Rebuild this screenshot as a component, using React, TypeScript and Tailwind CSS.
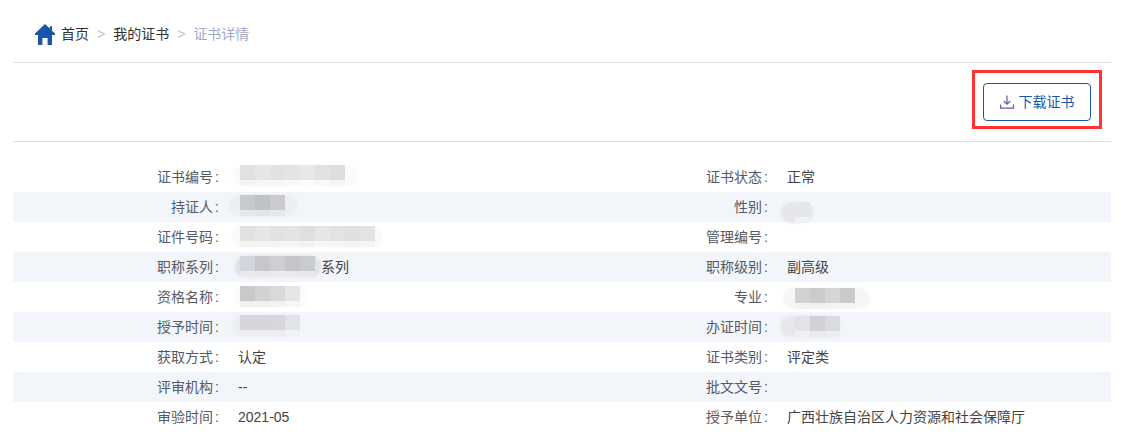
const sans = "font-['Liberation_Sans','Noto_Sans_CJK_SC',sans-serif]";

type Patch = {
  box: string;
  halo: string;
  top: string[];
  bottom: string[];
};

// mosaics hiding personal data, placed over the value cells
const patches: Record<string, Patch> = {
  number: {
    box: "left-[2px] top-[3px]",
    halo: "-left-[8px] right-[-12px] bg-[#fafafa]",
    top: ["bg-[#e3e1e0]", "bg-[#e6e6e8]", "bg-[#e2e2e0]", "bg-[#e4e4e4]", "bg-[#e8e8e8]", "bg-[#e2e2e2]", "bg-[#dedede]"],
    bottom: ["bg-[#f4f4f4]", "bg-[#f6f6f6]", "bg-[#f7f7f7]", "bg-[#f9f9f9]", "bg-[#fbfbfb]", "bg-[#f8f8f8]", "bg-[#f6f6f6]"],
  },
  holder: {
    box: "left-[2px] top-[3px]",
    halo: "-left-[11px] right-[-12px] bg-[#ebeef3]",
    top: ["bg-[#c8c9cd]", "bg-[#bfc3c6]", "bg-[#cbcad0]"],
    bottom: ["bg-[#e5e7eb]", "bg-[#e3e5e9]", "bg-[#e6e7ec]"],
  },
  idCard: {
    box: "left-[2px] top-[4px]",
    halo: "-left-[8px] right-[-8px] bg-[#fafafa]",
    top: ["bg-[#e3e1e0]", "bg-[#e6e6e6]", "bg-[#e2e2e2]", "bg-[#e4e4e4]", "bg-[#dfdfdf]", "bg-[#e6e6e6]", "bg-[#e3e3e3]", "bg-[#e0e0e0]", "bg-[#e3e3e3]"],
    bottom: ["bg-[#f3f3f3]", "bg-[#f5f5f5]", "bg-[#f4f4f4]", "bg-[#f5f5f5]", "bg-[#f3f3f3]", "bg-[#f7f7f7]", "bg-[#f5f5f5]", "bg-[#f3f3f3]", "bg-[#f5f5f5]"],
  },
  series: {
    box: "left-[2px] top-[4px]",
    halo: "-left-[5px] right-[-6px] bg-[#dfe2e7]",
    top: ["bg-[#d2d5db]", "bg-[#c5c7cb]", "bg-[#cdcfd5]", "bg-[#c3c5ca]", "bg-[#c9cbcf]"],
    bottom: ["bg-[#e8eaee]", "bg-[#e6e8ec]", "bg-[#e9ebef]", "bg-[#e8eaee]", "bg-[#e6e8ec]"],
  },
  title: {
    box: "left-[2px] top-[4px]",
    halo: "-left-[5px] right-[-8px] bg-[#fafafa]",
    top: ["bg-[#c9c9c9]", "bg-[#d2d2d2]", "bg-[#d9d9d9]", "bg-[#e6e6e6]"],
    bottom: ["bg-[#f0f0f0]", "bg-[#f0f0f0]", "bg-[#f3f3f3]", "bg-[#f7f7f7]"],
  },
  award: {
    box: "left-[2px] top-[3px]",
    halo: "-left-[8px] right-[0px] bg-[#ebeef3]",
    top: ["bg-[#d5d6db]", "bg-[#d5d6db]", "bg-[#d6d7dc]", "bg-[#e2e3e8]"],
    bottom: ["bg-[#ebedf1]", "bg-[#ebedf1]", "bg-[#ebedf1]", "bg-[#eff1f5]"],
  },
  gender: {
    box: "left-[8px] top-[10px]",
    halo: "-left-[14px] right-[-3px] bg-[#e4e6eb]",
    top: ["bg-[#e4e6ec]"],
    bottom: ["bg-[#f0f2f7]"],
  },
  major: {
    box: "left-[8px] top-[6px]",
    halo: "-left-[12px] right-[-15px] bg-[#f6f6f6]",
    top: ["bg-[#d2d2d2]", "bg-[#cbcbcb]", "bg-[#d6d6d6]", "bg-[#cacaca]"],
    bottom: ["bg-[#f2f2f2]", "bg-[#f0f0f0]", "bg-[#f3f3f3]", "bg-[#f4f4f4]"],
  },
  issued: {
    box: "left-[8px] top-[4px]",
    halo: "-left-[15px] right-[0px] bg-[#e5e7ec]",
    top: ["bg-[#e2e3e8]", "bg-[#d0d1d6]", "bg-[#dadbe0]"],
    bottom: ["bg-[#eef0f4]", "bg-[#e9ebef]", "bg-[#ebedf1]"],
  },
};

function Mosaic({ patch }: { patch: Patch }) {
  return (
    <div className={`absolute ${patch.box}`}>
      <div className={`absolute inset-y-0 rounded-[10px] blur-[1px] ${patch.halo}`} />
      <div className="relative flex">
        {patch.top.map((c, i) => (
          <div key={i} className="flex flex-col">
            <div className={`h-[15px] w-[15px] ${c}`} />
            <div className={`h-[6px] w-[15px] ${patch.bottom[i]}`} />
          </div>
        ))}
      </div>
    </div>
  );
}

type Cell = { label: string; value?: string; patch?: string; indent?: string };

const rows: [Cell, Cell][] = [
  [{ label: "证书编号", patch: "number" }, { label: "证书状态", value: "正常" }],
  [{ label: "持证人", patch: "holder" }, { label: "性别", patch: "gender" }],
  [{ label: "证件号码", patch: "idCard" }, { label: "管理编号" }],
  [{ label: "职称系列", value: "系列", patch: "series", indent: "pl-[83px]" }, { label: "职称级别", value: "副高级" }],
  [{ label: "资格名称", patch: "title" }, { label: "专业", patch: "major" }],
  [{ label: "授予时间", patch: "award" }, { label: "办证时间", patch: "issued" }],
  [{ label: "获取方式", value: "认定" }, { label: "证书类别", value: "评定类" }],
  [{ label: "评审机构", value: "--" }, { label: "批文文号" }],
  [{ label: "审验时间", value: "2021-05" }, { label: "授予单位", value: "广西壮族自治区人力资源和社会保障厅" }],
];

function Field({ cell }: { cell: Cell }) {
  return (
    <div className="flex h-[30px] items-center">
      <div className="w-[206px] shrink-0 pt-[1px] text-right text-[#555a66]">
        {cell.label}
        <span className="ml-[2px]">:</span>
      </div>
      <div className={`relative ml-[19px] h-[30px] flex-1 leading-[30px] text-[#444] ${cell.indent ?? ""}`}>
        {cell.value}
        {cell.patch && <Mosaic patch={patches[cell.patch]} />}
      </div>
    </div>
  );
}

export default function App() {
  return (
    <div className={`h-[446px] w-[1123px] overflow-hidden bg-white pl-[13px] pr-[12px] ${sans}`}>
      <nav className="flex h-[62px] items-center pl-[22px] pt-[6px] text-[14px] text-[#303133]">
        <svg viewBox="0 0 20 21" className="mr-[6px] h-[21px] w-[20px] fill-[#1a56a8]">
          <path d="M10 0 L14.8 4.6 V2.2 H17 V6.7 L20 9.6 V11 H17 V21 H12.6 V14 H7.4 V21 H3 V11 H0 V9.6 Z" />
        </svg>
        <span>首页</span>
        <span className="mx-[8px] text-[#c0c4cc]">&gt;</span>
        <span>我的证书</span>
        <span className="mx-[8px] text-[#c0c4cc]">&gt;</span>
        <span className="text-[#a3aac8]">证书详情</span>
      </nav>

      <div className="flex h-[80px] items-center justify-end border-y border-[#e0e0e0] pr-[20px]">
        <div className="relative">
          <button className="flex h-[38px] w-[108px] items-center justify-center gap-[5px] rounded-[4px] border border-[#1a56a8] bg-white text-[14px] text-[#1a56a8]">
            <svg viewBox="0 0 14 14" className="h-[14px] w-[14px] fill-none stroke-[#6a5aa8]" strokeWidth="1.2">
              <path d="M7 0.5 V9 M3.8 6 L7 9.2 L10.2 6" />
              <path d="M0.6 9.5 V13.2 H13.4 V9.5" />
            </svg>
            下载证书
          </button>
          {/* red annotation frame */}
          <div className="pointer-events-none absolute -inset-x-[11px] -top-[13px] -bottom-[8px] border-[3px] border-[#ff3333]" />
        </div>
      </div>

      <div className="pt-[20px] text-[14px]">
        {rows.map(([left, right], i) => (
          <div key={i} className={`grid grid-cols-2 ${i % 2 === 1 ? "bg-[#f2f5fa]" : ""}`}>
            <Field cell={left} />
            <Field cell={right} />
          </div>
        ))}
      </div>
    </div>
  );
}
